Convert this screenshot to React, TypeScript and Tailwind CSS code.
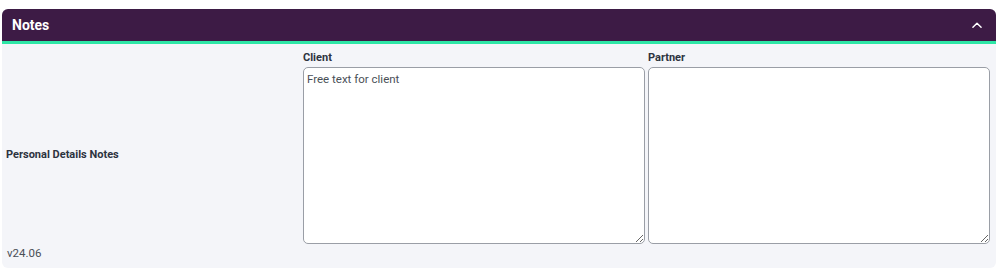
export default function App() {
  return (
    <div className="bg-white pt-[9px] px-[2px] font-['Roboto',sans-serif]">
      <section className="rounded-[6px] bg-[#f4f5f9] overflow-hidden w-[994px]">
        {/* Header */}
        <div className="flex h-[32px] items-center justify-between bg-[#3d1b45] px-[10px] border-b-[3px] border-[#2ee6a6] box-content">
          <h2 className="text-[14px] font-bold text-white">Notes</h2>
          <svg width="14" height="14" viewBox="0 0 24 24" fill="none" stroke="white" strokeWidth="2.5" strokeLinecap="round" strokeLinejoin="round" className="mr-[2px]">
            <path d="M5 16l7-7 7 7" />
          </svg>
        </div>

        {/* Body */}
        <div className="pl-[4px] pr-[6px] pt-[4px]">
          <div className="grid grid-cols-[294px_1fr_1fr] gap-x-[3px]">
            <div />
            <label className="text-[11px] font-bold text-[#2d3340] h-[19px] leading-[19px]">Client</label>
            <label className="text-[11px] font-bold text-[#2d3340] h-[19px] leading-[19px]">Partner</label>

            <div className="flex items-center text-[11px] font-bold text-[#2d3340]">
              Personal Details Notes
            </div>
            <textarea
              className="h-[177px] rounded-[5px] border border-[#9a9ea6] bg-white px-[3px] py-[3px] text-[11.5px] text-[#4a4f57] outline-none"
              defaultValue="Free text for client"
            />
            <textarea className="h-[177px] rounded-[5px] border border-[#9a9ea6] bg-white px-[3px] py-[3px] text-[11.5px] text-[#4a4f57] outline-none" />
          </div>
          <div className="pt-[1px] pb-[7px] pl-[1px] text-[11.5px] leading-[16px] text-[#4a4f57]">v24.06</div>
        </div>
      </section>
    </div>
  )
}
